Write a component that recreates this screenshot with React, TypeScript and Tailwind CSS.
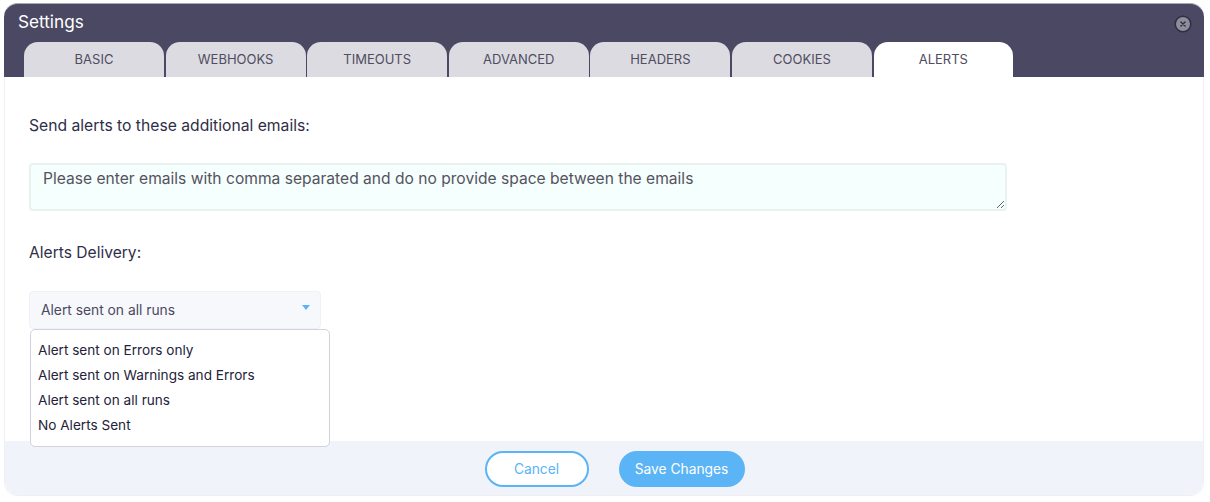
import React from "react";

const tabs = ["BASIC", "WEBHOOKS", "TIMEOUTS", "ADVANCED", "HEADERS", "COOKIES"];
const options = [
  "Alert sent on Errors only",
  "Alert sent on Warnings and Errors",
  "Alert sent on all runs",
  "No Alerts Sent",
];

export default function App() {
  return (
    <div className="w-[1210px] h-[502px] bg-white pl-[4px] pt-[3px] overflow-hidden font-['Inter',sans-serif]">
      <div className="relative w-[1200px] h-[493px] flex flex-col rounded-[14px] bg-white border-r border-b border-l border-[#eef0f4]">
        <div className="h-[74px] shrink-0 -mx-px bg-[#4a4862] rounded-t-[14px] border-t border-[#a9a8b5] flex flex-col">
          <div className="flex items-center justify-between pl-[14px] pr-[12px] h-[38px] shrink-0">
            <span className="text-[17.2px] text-white relative top-[-1.5px]">Settings</span>
            <svg width="18" height="18" viewBox="0 0 18 18" className="relative top-[1px]">
              <circle cx="9" cy="9" r="7.8" fill="#8e8d9c" stroke="#2f2e45" strokeWidth="1.6" />
              <path d="M6.9 6.9 11.1 11.1M11.1 6.9 6.9 11.1" stroke="#2f2e45" strokeWidth="1.4" strokeLinecap="round" />
            </svg>
          </div>
          <div className="flex gap-[1.6px] pl-[20px] h-[35px] items-end">
            {tabs.map((t) => (
              <div
                key={t}
                className="w-[140px] h-[35px] rounded-t-[14px] bg-[#dcdbe1] flex items-center justify-center text-[13px] text-[#4f4d5f]"
              >
                {t}
              </div>
            ))}
            <div className="w-[139.5px] h-[35px] rounded-t-[14px] bg-white flex items-center justify-center text-[13px] text-[#4f4d5f]">
              ALERTS
            </div>
          </div>
        </div>

        <div className="flex-1 flex flex-col pl-[24px]">
          <label className="block mt-[39px] h-[20px] leading-[20px] text-[15.7px] text-[#2f2e48]">
            Send alerts to these additional emails:
          </label>
          <textarea
            className="block mt-[27px] w-[978px] h-[48px] border-2 border-[#e8f2f1] rounded-[4px] bg-[#f5fffd] pl-[12px] pt-[4px] text-[15.6px] leading-[20px] outline-none placeholder:text-[#55535f]"
            placeholder="Please enter emails with comma separated and do no provide space between the emails"
          />
          <label className="block mt-[32px] h-[20px] leading-[20px] text-[15.6px] text-[#2f2e48]">
            Alerts Delivery:
          </label>
          <div className="mt-[28px] w-[292px] h-[38px] rounded-[4px] bg-[#f7f8fc] border border-[#f0f1f7] flex items-center justify-between pl-[11px] pr-[10px]">
            <span className="text-[13.8px] text-[#4a4860] relative top-[0.5px]">Alert sent on all runs</span>
            <span className="w-0 h-0 border-l-[4px] border-r-[4px] border-t-[5px] border-l-transparent border-r-transparent border-t-[#5ab4f5] relative top-[-3px]" />
          </div>
        </div>

        <div className="h-[54px] shrink-0 bg-[#f0f3fa] rounded-b-[14px] flex items-center justify-center gap-[30px] pl-[21px] pt-[2px]">
          <button className="w-[104px] h-[36px] rounded-full border-2 border-[#5ab4f5] bg-white text-[#5ab4f5] text-[13.8px]">
            Cancel
          </button>
          <button className="w-[126px] h-[36px] rounded-full bg-[#5ab4f5] text-white text-[13.8px]">
            Save Changes
          </button>
        </div>

        <div className="absolute left-[25px] top-[326px] w-[300px] h-[118px] bg-white border border-[#d2d2dc] rounded-[5px] pt-[8px] pl-[7px]">
          {options.map((o) => (
            <div key={o} className="h-[25px] leading-[25px] text-[13.6px] text-[#23223a]">
              {o}
            </div>
          ))}
        </div>
      </div>
    </div>
  );
}
